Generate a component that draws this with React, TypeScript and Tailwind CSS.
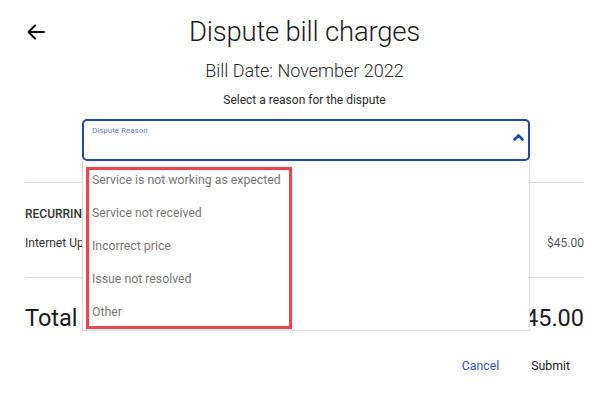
const reasons = [
  "Service is not working as expected",
  "Service not received",
  "Incorrect price",
  "Issue not resolved",
  "Other",
];

const BackArrow = () => (
  <svg width="18" height="16" viewBox="0 0 18 16" fill="none" stroke="#111" strokeWidth="2" strokeLinecap="round" strokeLinejoin="round">
    <path d="M17 8H2" />
    <path d="M8 1.5L1.5 8L8 14.5" />
  </svg>
);

const ChevronUp = () => (
  <svg width="11" height="7" viewBox="0 0 11 7" fill="none" stroke="#1c47b8" strokeWidth="2.6" strokeLinecap="round" strokeLinejoin="round">
    <path d="M1.5 5.5L5.5 1.5L9.5 5.5" />
  </svg>
);

export default function App() {
  return (
    <div className="w-[609px] h-[396px] bg-white overflow-hidden font-['Roboto','Liberation_Sans',sans-serif] text-[#222]">
      <div className="relative flex justify-center pt-[14px] h-[52px]">
        <button className="absolute left-[27px] top-[24px]">
          <BackArrow />
        </button>
        <h1 className="text-[27.5px] leading-[36px] font-light tracking-[-0.2px] text-[#1b1b1b]">
          Dispute bill charges
        </h1>
      </div>
      <p className="text-center text-[18px] leading-[24px] font-light text-[#2a2a2a] mt-[7px]">
        Bill Date: November 2022
      </p>
      <p className="text-center text-[12px] leading-[16px] text-[#2a2a2a] mt-[9px]">
        Select a reason for the dispute
      </p>

      <div className="relative mx-[82px] w-[448px] mt-[11px] z-10">
        <div className="h-[42px] rounded-[5px] border-2 border-[#1c47b8] bg-white relative">
          <span className="absolute left-[8px] top-[4px] text-[8px] text-[#5a7fd8]">Dispute Reason</span>
          <span className="absolute right-[4px] top-[13px]">
            <ChevronUp />
          </span>
        </div>
        <div className="absolute left-0 top-[42px] w-[448px] h-[170px] bg-white border border-t-0 border-[#dedede] shadow-[0_1px_2px_rgba(0,0,0,0.06)]">
          <ul className="flex flex-col pt-[3px]">
            {reasons.map((r) => (
              <li key={r} className="h-[33px] flex items-center pl-[9px] text-[12.3px] text-[#777]">
                {r}
              </li>
            ))}
          </ul>
          <div className="absolute left-[3px] top-[6px] w-[206px] h-[162px] border-[3px] border-[#f0434a]" />
        </div>
      </div>

      <div className="px-[25px] mt-[21px]">
        <div className="border-t border-[#dcdcdc]" />
        <p className="text-[12px] leading-[16px] text-[#333] mt-[23px] uppercase font-medium">Recurring charges</p>
        <div className="flex justify-between items-center mt-[13px] text-[12px] leading-[16px]">
          <span className="text-[#333]">Internet Upgrade</span>
          <span className="text-[#555]">$45.00</span>
        </div>
        <div className="border-t border-[#dcdcdc] mt-[26px]" />
        <div className="flex justify-between items-center mt-[25px] text-[23.5px] leading-[30px] text-[#1b1b1b]">
          <span>Total</span>
          <span>$45.00</span>
        </div>
        <div className="flex justify-end items-center gap-[32px] mt-[24px] pr-[14px] text-[12.3px]">
          <button className="text-[#2c55c9]">Cancel</button>
          <button className="text-[#1b1b1b]">Submit</button>
        </div>
      </div>
    </div>
  );
}
